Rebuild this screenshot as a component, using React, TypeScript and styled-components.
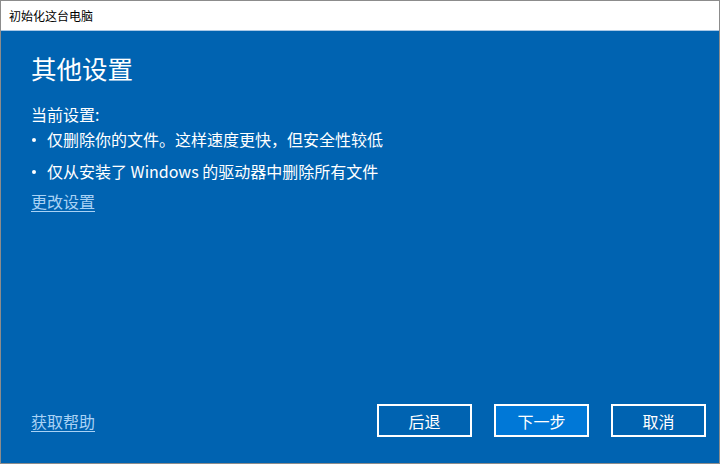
import React from 'react';
import styled, { createGlobalStyle } from 'styled-components';

const GlobalStyle = createGlobalStyle`
  html, body {
    margin: 0;
    padding: 0;
    background: #ffffff;
  }
  * {
    box-sizing: border-box;
  }
`;

const Window = styled.div`
  width: 720px;
  height: 464px;
  border: 1px solid #8c8c8c;
  display: flex;
  flex-direction: column;
  font-family: "Noto Sans CJK SC", "Noto Sans", sans-serif;
  overflow: hidden;
`;

const TitleBar = styled.div`
  height: 30px;
  flex-shrink: 0;
  background: #ffffff;
  border-bottom: 1px solid #a9c8e6;
  display: flex;
  align-items: center;
  padding-left: 8px;
  font-size: 12px;
  color: #000000;
`;

const Body = styled.div`
  flex: 1;
  background: #0063b1;
  color: #ffffff;
  display: flex;
  flex-direction: column;
  padding: 20px 30px 26px 30px;
`;

const Heading = styled.h1`
  margin: 0 0 18px 0;
  font-size: 25.5px;
  font-weight: 400;
  line-height: 34px;
`;

const Label = styled.div`
  font-size: 16px;
  line-height: 22px;
`;

const List = styled.ul`
  list-style: none;
  margin: 3px 0 0 0;
  padding: 0;
  display: flex;
  flex-direction: column;
  gap: 10px;
`;

const Item = styled.li`
  font-size: 16px;
  line-height: 22px;
  display: flex;
  align-items: center;
  &::before {
    content: '';
    width: 4px;
    height: 4px;
    border-radius: 50%;
    background: #ffffff;
    margin: 1px 11px 0 1px;
    flex-shrink: 0;
  }
`;

const Link = styled.a<{ $spaced?: boolean }>`
  color: #a9d2f5;
  font-size: 16px;
  line-height: 22px;
  text-decoration: underline;
  text-underline-offset: 3px;
  cursor: pointer;
  align-self: ${p => (p.$spaced ? 'flex-start' : 'center')};
  margin-top: ${p => (p.$spaced ? '8px' : '0')};
`;

const Spacer = styled.div`
  flex: 1;
`;

const Footer = styled.div`
  display: flex;
  align-items: center;
`;

const Buttons = styled.div`
  margin-left: auto;
  display: flex;
  gap: 22px;
  margin-right: -17px;
`;

const Button = styled.button<{ $primary?: boolean }>`
  width: 95px;
  height: 33px;
  border: 2px solid #ffffff;
  background: ${p => (p.$primary ? '#0078d7' : 'transparent')};
  color: #ffffff;
  font-family: "Noto Sans CJK SC", "Noto Sans", sans-serif;
  font-size: 16px;
  padding: 0;
  cursor: pointer;
`;

export default function App() {
  return (
    <>
      <GlobalStyle />
      <Window>
        <TitleBar>初始化这台电脑</TitleBar>
        <Body>
          <Heading>其他设置</Heading>
          <Label>当前设置:</Label>
          <List>
            <Item>仅删除你的文件。这样速度更快，但安全性较低</Item>
            <Item>仅从安装了 Windows 的驱动器中删除所有文件</Item>
          </List>
          <Link $spaced>更改设置</Link>
          <Spacer />
          <Footer>
            <Link>获取帮助</Link>
            <Buttons>
              <Button>后退</Button>
              <Button $primary>下一步</Button>
              <Button>取消</Button>
            </Buttons>
          </Footer>
        </Body>
      </Window>
    </>
  );
}
